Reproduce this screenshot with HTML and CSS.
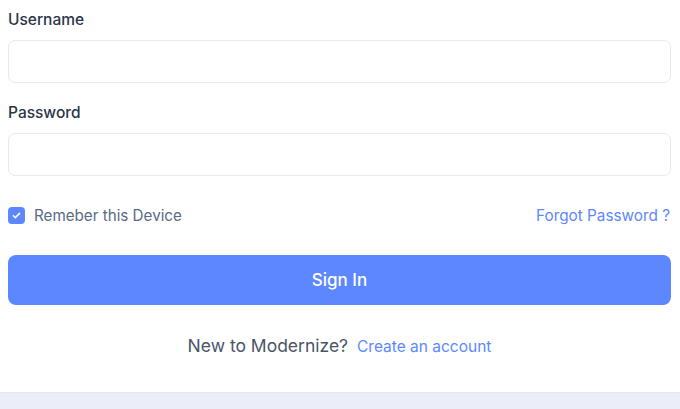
FILE: index.html
```html
<!DOCTYPE html>
<html lang="en">
<head>
<meta charset="utf-8">
<title>Sign In</title>
<link rel="stylesheet" href="styles.css">
</head>
<body>
<main class="page">
  <form class="login-form">
    <div class="field">
      <label class="field-label" for="username">Username</label>
      <input class="field-input" id="username" type="text">
    </div>
    <div class="field field-password">
      <label class="field-label" for="password">Password</label>
      <input class="field-input" id="password" type="password">
    </div>
    <div class="options-row">
      <label class="remember">
        <span class="checkbox">
          <svg viewBox="0 0 16 16" width="11" height="11"><path d="M3.5 8.3l2.9 2.8 6-6.2" fill="none" stroke="#fff" stroke-width="2.2" stroke-linecap="round" stroke-linejoin="round"/></svg>
        </span>
        <span class="remember-text">Remeber this Device</span>
      </label>
      <a class="forgot-link" href="#">Forgot Password ?</a>
    </div>
    <button class="submit-btn" type="button">Sign In</button>
    <p class="signup-line">New to Modernize? <a class="signup-link" href="#">Create an account</a></p>
  </form>
  <div class="footer-band"></div>
</main>
</body>
</html>
```

FILE: styles.css
```css
* { box-sizing: border-box; }
html, body { margin: 0; padding: 0; background: #fff; }
body { font-family: "Inter", "Liberation Sans", sans-serif; color: #2a3547; }
.page { width: 680px; height: 409px; display: flex; flex-direction: column; overflow: hidden; }
.login-form { padding: 10px 9px 0 8px; flex: 1; display: flex; flex-direction: column; }
.field { display: flex; flex-direction: column; }
.field-password { margin-top: 20px; }
.field-label { font-size: 15.5px; line-height: 20px; font-weight: 500; color: #2a3547; margin-bottom: 10px; }
.field-input { height: 43px; border: 1px solid #e5eaef; border-radius: 7px; background: #fff; outline: none; }
.options-row { margin-top: 27px; height: 24px; display: flex; align-items: center; justify-content: space-between; }
.remember { display: flex; align-items: center; gap: 9px; }
.checkbox { width: 17px; height: 17px; border-radius: 4px; background: #5d87ff; display: flex; align-items: center; justify-content: center; }
.remember-text { font-size: 15.2px; color: #5a6a85; }
.forgot-link { font-size: 15.3px; font-weight: 400; color: #5d87ff; text-decoration: none; margin-right: 1px; }
.submit-btn { margin-top: 28px; height: 50px; border: 0; border-radius: 8px; background: #5d87ff; color: #fff; font-family: inherit; font-size: 17px; font-weight: 500; }
.signup-line { margin: 29px 0 0; text-align: center; font-size: 17.5px; line-height: 24px; color: #4a5568; font-weight: 400; }
.signup-link { color: #5d87ff; font-size: 15.5px; text-decoration: none; margin-left: 4px; }
.footer-band { height: 17px; background: #ebeef9; border-top: 1px solid #e3e7f1; }
```
